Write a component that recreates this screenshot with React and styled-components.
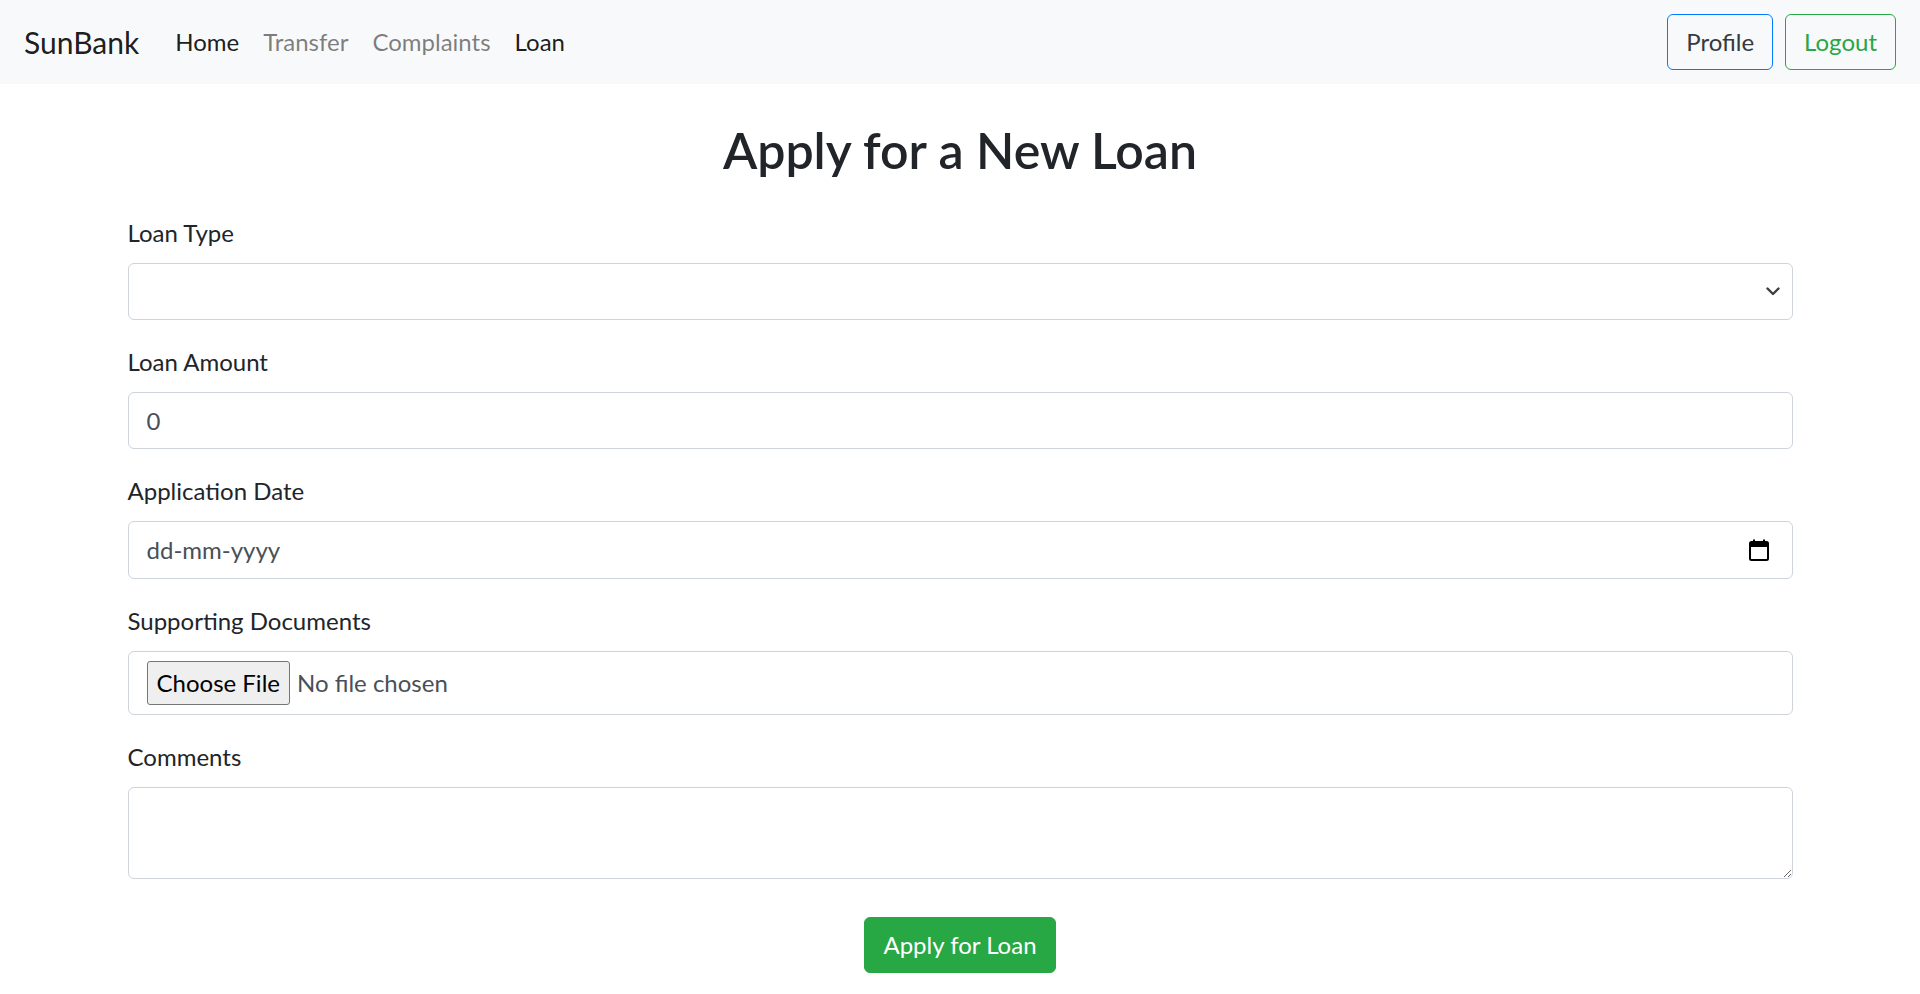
import React from "react";
import styled, { createGlobalStyle } from "styled-components";

const Global = createGlobalStyle`
  *, *::before, *::after { box-sizing: border-box; }
  html { font-size: 24px; }
  body {
    margin: 0;
    font-family: Lato, "Noto Sans", "Liberation Sans", sans-serif;
    font-size: 24px;
    line-height: 1.5;
    color: #212529;
    background: #fff;
  }
`;

const Navbar = styled.nav`
  display: flex;
  align-items: center;
  justify-content: space-between;
  height: 84px;
  padding: 12px 24px;
  background: #f8f9fa;
`;

const NavLeft = styled.div`
  display: flex;
  align-items: center;
`;

const Brand = styled.a`
  font-size: 30px;
  line-height: 45px;
  padding: 7.5px 0;
  margin-right: 24px;
  color: rgba(0, 0, 0, 0.9);
  text-decoration: none;
  white-space: nowrap;
`;

const NavList = styled.ul`
  display: flex;
  list-style: none;
  margin: 0;
  padding: 0;
`;

const NavLink = styled.a`
  display: block;
  padding: 12px 12px;
  line-height: 36px;
  color: ${(p) => (p.$muted ? "rgba(0,0,0,0.5)" : "rgba(0,0,0,0.9)")};
  text-decoration: none;
`;

const NavRight = styled.div`
  display: flex;
  align-items: center;
  gap: 12px;
`;

const OutlineButton = styled.button`
  font: inherit;
  font-size: 24px;
  line-height: 36px;
  padding: 9px 18px;
  border-radius: 6px;
  background: transparent;
  border: 1.5px solid ${(p) => p.$border};
  color: ${(p) => p.$color};
  cursor: pointer;
`;

const Container = styled.main`
  max-width: 1710px;
  margin: 0 auto;
  padding: 0 22.5px;
`;

const Title = styled.h1`
  margin: 36px 0 35px;
  font-size: 50px;
  font-weight: 600;
  line-height: 60px;
  text-align: center;
  color: #212529;
`;

const Group = styled.div`
  margin-bottom: ${(p) => p.$mb || "24px"};
`;

const Label = styled.label`
  display: block;
  margin-bottom: 12px;
  line-height: 36px;
`;

const controlBase = `
  display: flex;
  align-items: center;
  width: 100%;
  border: 1.5px solid #ced4da;
  border-radius: 6px;
  background: #fff;
  font: inherit;
  font-size: 24px;
  line-height: 36px;
  color: #495057;
`;

const SelectBox = styled.div`
  ${controlBase}
  height: 57px;
  padding: 9px 12px 9px 18px;
  justify-content: flex-end;
`;

const TextInput = styled.input`
  ${controlBase}
  height: 57px;
  padding: 9px 18px;
  outline: none;
`;

const DateBox = styled.div`
  ${controlBase}
  height: 58px;
  padding: 9px 23px 9px 18px;
`;

const DateField = styled.input`
  flex: 1;
  border: 0;
  outline: none;
  padding: 0;
  font: inherit;
  color: #495057;
  background: transparent;
  &::placeholder { color: #495057; opacity: 1; }
`;

const FileBox = styled.div`
  ${controlBase}
  height: 64px;
  padding: 9px 18px;
  gap: 7px;
`;

const ChooseButton = styled.button`
  height: 44px;
  padding: 0 9px;
  font: inherit;
  font-size: 24px;
  line-height: 1;
  color: #000;
  background: #efefef;
  border: 1.5px solid #767676;
  border-radius: 3px;
`;

const FileText = styled.span`
  color: #495057;
`;

const TextArea = styled.textarea`
  display: block;
  width: 100%;
  height: 92px;
  padding: 9px 18px;
  border: 1.5px solid #ced4da;
  border-radius: 6px;
  font: inherit;
  color: #495057;
  outline: none;
`;

const Actions = styled.div`
  display: flex;
  justify-content: center;
  padding-top: 14px;
`;

const SubmitButton = styled.button`
  font: inherit;
  font-size: 24px;
  line-height: 36px;
  padding: 9px 18px;
  border-radius: 6px;
  border: 1.5px solid #28a745;
  background: #28a745;
  color: #fff;
  cursor: pointer;
`;

const Chevron = () => (
  <svg width="14" height="9" viewBox="0 0 14 9" aria-hidden="true">
    <path d="M1.5 1.5 L7 7 L12.5 1.5" fill="none" stroke="#3c4043" strokeWidth="2.4" strokeLinecap="round" strokeLinejoin="round" />
  </svg>
);

const CalendarIcon = () => (
  <svg width="20" height="22" viewBox="0 0 20 22" aria-hidden="true">
    <rect x="1" y="3" width="18" height="18" rx="1.5" fill="none" stroke="#000" strokeWidth="2" />
    <rect x="1" y="3" width="18" height="5" fill="#000" />
    <rect x="4" y="0.5" width="2" height="4" fill="#000" />
    <rect x="14" y="0.5" width="2" height="4" fill="#000" />
  </svg>
);

export default function App() {
  return (
    <>
      <Global />
      <Navbar>
        <NavLeft>
          <Brand href="#">SunBank</Brand>
          <NavList>
            <li><NavLink href="#">Home</NavLink></li>
            <li><NavLink href="#" $muted>Transfer</NavLink></li>
            <li><NavLink href="#" $muted>Complaints</NavLink></li>
            <li><NavLink href="#">Loan</NavLink></li>
          </NavList>
        </NavLeft>
        <NavRight>
          <OutlineButton $border="#007bff" $color="#343a40">Profile</OutlineButton>
          <OutlineButton $border="#28a745" $color="#28a745">Logout</OutlineButton>
        </NavRight>
      </Navbar>
      <Container>
        <Title>Apply for a New Loan</Title>
        <form onSubmit={(e) => e.preventDefault()}>
          <Group>
            <Label>Loan Type</Label>
            <SelectBox role="combobox">
              <Chevron />
            </SelectBox>
          </Group>
          <Group>
            <Label>Loan Amount</Label>
            <TextInput type="text" defaultValue="0" />
          </Group>
          <Group>
            <Label>Application Date</Label>
            <DateBox>
              <DateField type="text" placeholder="dd-mm-yyyy" />
              <CalendarIcon />
            </DateBox>
          </Group>
          <Group>
            <Label>Supporting Documents</Label>
            <FileBox>
              <ChooseButton type="button">Choose File</ChooseButton>
              <FileText>No file chosen</FileText>
            </FileBox>
          </Group>
          <Group>
            <Label>Comments</Label>
            <TextArea rows={2} />
          </Group>
          <Actions>
            <SubmitButton type="submit">Apply for Loan</SubmitButton>
          </Actions>
        </form>
      </Container>
    </>
  );
}
